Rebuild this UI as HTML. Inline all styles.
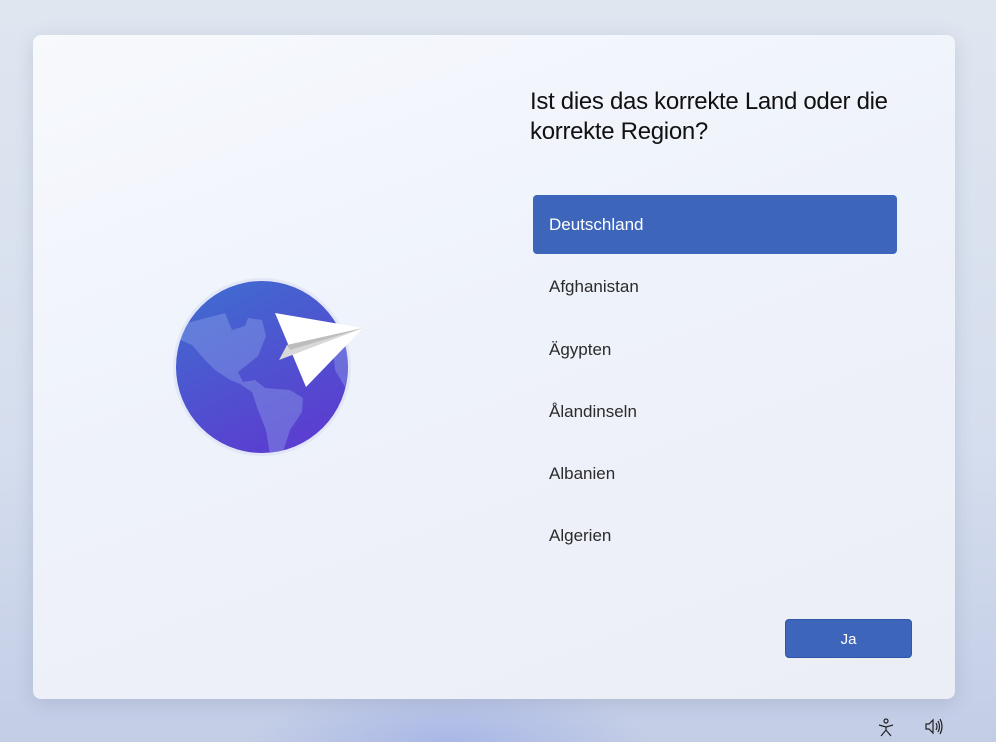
<!DOCTYPE html>
<html><head><meta charset="utf-8"><style>
html,body{margin:0;padding:0;width:996px;height:742px;overflow:hidden;font-family:"Segoe UI","Liberation Sans",sans-serif;}
body{background:linear-gradient(180deg,#dfe6f0 0%,#d5deee 60%,#c3cde6 100%);position:relative;}
.bg1{position:absolute;left:250px;top:680px;width:400px;height:62px;background:radial-gradient(ellipse at 50% 100%,#a9b7e6 0%,rgba(169,183,230,0) 70%);}
.card{position:absolute;left:33px;top:35px;width:922px;height:664px;border-radius:8px;background:linear-gradient(160deg,#f7f9fc 0%,#eef2fb 45%,#eceef5 100%);box-shadow:0 4px 18px rgba(80,90,130,.18);}
h1{position:absolute;left:530px;top:87px;margin:0;font-weight:400;font-size:24px;line-height:30px;color:#111;width:420px;letter-spacing:-0.3px;}
.sel{position:absolute;left:533px;top:195px;width:364px;height:59px;background:#3d66bb;border-radius:4px;}
.item{position:absolute;left:549px;font-size:17px;color:#2b2b2b;}
.btn{position:absolute;left:785px;top:619px;width:127px;height:39px;background:#3d66bb;border:1px solid #2f56a8;border-radius:4px;color:#fff;font-size:15px;text-align:center;line-height:39px;box-sizing:border-box;}
</style></head><body>
<div class="bg1"></div>
<div class="card"></div>
<svg style="position:absolute;left:0;top:0" width="996" height="742">
<defs>
<linearGradient id="g" x1="0" y1="0" x2="0.5" y2="1"><stop offset="0" stop-color="#3e6fd0"/><stop offset="1" stop-color="#5a3fd0"/></linearGradient>
<clipPath id="c"><circle cx="262" cy="367" r="86"/></clipPath>
</defs>
<circle cx="262" cy="367" r="89" fill="#d5dcf5" opacity=".5"/>
<circle cx="262" cy="367" r="86" fill="url(#g)"/>
<g clip-path="url(#c)" fill="#9ab2ee" opacity=".35">
<path d="M180 325 L225 313 L232 330 L245 326 L248 318 L262 320 L266 336 L258 356 L247 365 L238 372 L243 382 L255 380 L265 388 L290 390 L303 398 L302 412 L290 430 L282 455 L270 455 L266 430 L258 410 L252 392 L240 384 L230 380 L215 370 L205 360 L192 345 L176 338Z"/>
<path d="M340 320 L360 330 L360 390 L345 387 L335 370 L332 340Z"/>
</g>
<path d="M275 313 L363 328 L306 387Z" fill="#fff"/>
<path d="M287 345 L363 328 L279 360Z" fill="#d8d8d8"/>
<path d="M287 345 L363 328 L290 350Z" fill="#bdbdbd"/>
<g stroke="#222" stroke-width="1.2" fill="none">
<circle cx="886" cy="721" r="2"/>
<path d="M879 725 L886 727 L893 725 M886 727 L886 731 M881 736 L886 730 L891 736"/>
<path d="M926 724 L929 724 L933 720 L933 733 L929 729 L926 729Z M936 723 Q938 726.5 936 730 M938 721 Q941 726.5 938 732 M940 719 Q944 726.5 940 734"/>
</g>
</svg>
<h1>Ist dies das korrekte Land oder die korrekte Region?</h1>
<div class="sel"></div>
<div class="item" style="top:215px;color:#fff">Deutschland</div>
<div class="item" style="top:277px">Afghanistan</div>
<div class="item" style="top:340px">Ägypten</div>
<div class="item" style="top:402px">Ålandinseln</div>
<div class="item" style="top:464px">Albanien</div>
<div class="item" style="top:526px">Algerien</div>
<div class="btn">Ja</div>
</body></html>
